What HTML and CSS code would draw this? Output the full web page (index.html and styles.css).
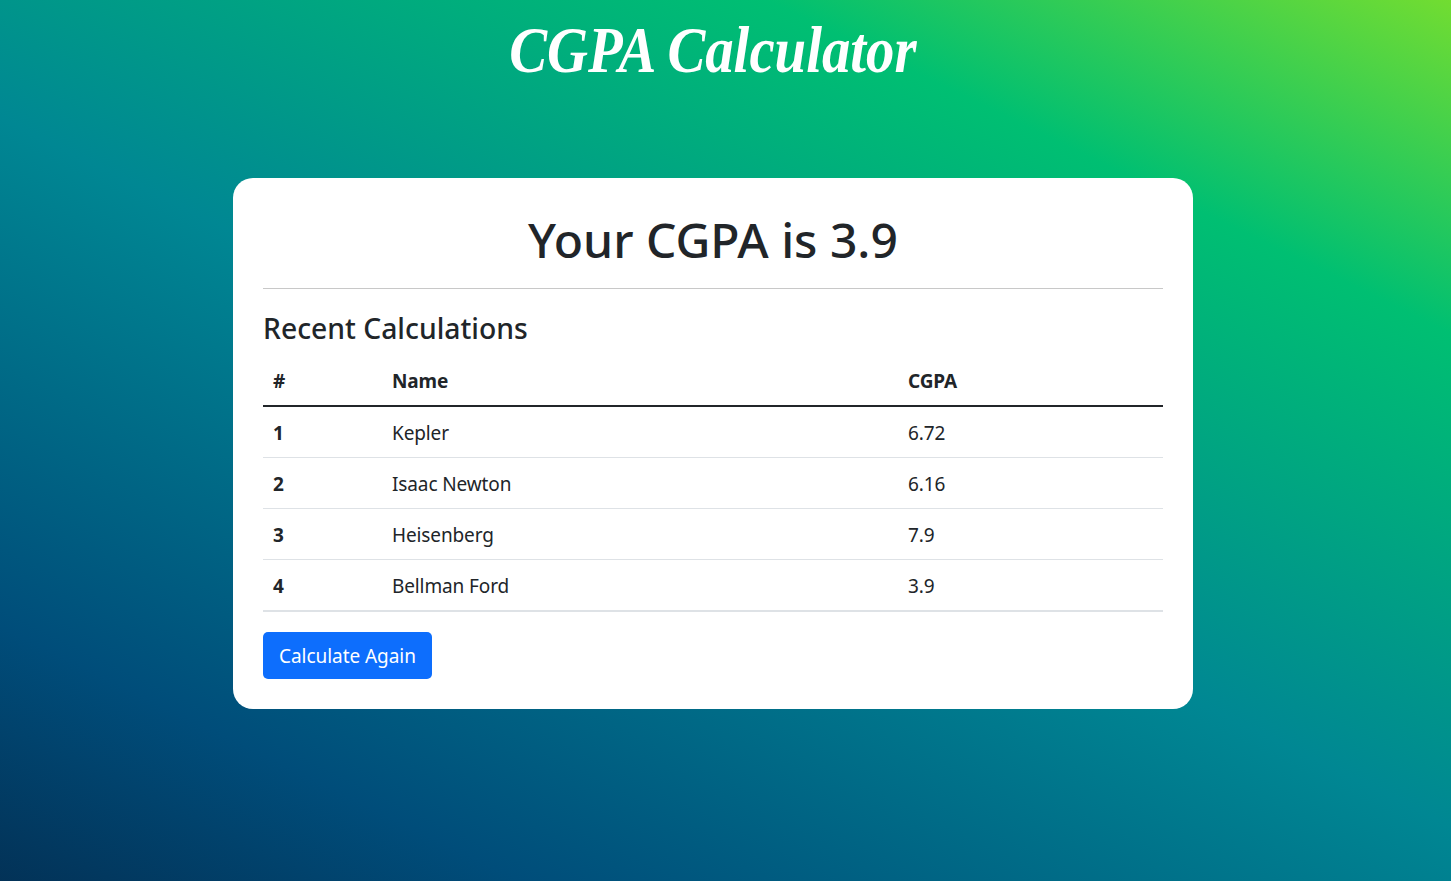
FILE: index.html
```html
<!DOCTYPE html>
<html>
<head>
  <title>CGPA Calculator</title>
  <link rel="stylesheet" href="styles.css">
</head>
<body>

  <div class="wrap">
    <div class="title-bar">
      <h1 class="page-title">CGPA Calculator</h1>
    </div>

    <div class="card">
      <h1 class="result">Your CGPA is 3.9</h1>
      <hr>
      <h3 class="recent">Recent Calculations</h3>

      <table class="results-table">
        <thead>
          <tr>
            <th class="col-num">#</th>
            <th class="col-name">Name</th>
            <th>CGPA</th>
          </tr>
        </thead>
        <tbody>
          <tr><th>1</th><td>Kepler</td><td>6.72</td></tr>
          <tr><th>2</th><td>Isaac Newton</td><td>6.16</td></tr>
          <tr><th>3</th><td>Heisenberg</td><td>7.9</td></tr>
          <tr><th>4</th><td>Bellman Ford</td><td>3.9</td></tr>
        </tbody>
      </table>

      <button class="btn">Calculate Again</button>
    </div>
  </div>

</body>
</html>
```

FILE: styles.css
```css
* {
  box-sizing: border-box;
}
html, body {
  height: 100%;
}
body {
  margin: 0;
  overflow: hidden;
  background: linear-gradient(26deg, #051937 -15%, #004d7a 16%, #008793 48%, #00bf72 79%, #a8eb12 110%);
  color: #212529;
  font-family: "Noto Sans", sans-serif;
  font-size: 19px;
}
.wrap {
  width: 960px;
  margin-left: 233px;
}
.title-bar {
  height: 178px;
  padding-top: 14px;
  text-align: center;
}
.page-title {
  display: inline-block;
  margin: 0;
  color: #fff;
  font-family: "Liberation Serif", serif;
  font-style: italic;
  font-weight: 700;
  font-size: 66px;
  line-height: 72px;
  transform: scaleX(0.86);
}
.card {
  height: 531px;
  padding: 30px;
  background: #fff;
  border-radius: 20px;
}
.result {
  margin: 0;
  padding-top: 1px;
  text-align: center;
  font-weight: 500;
  font-size: 48px;
  line-height: 62px;
}
hr {
  margin: 17px 0 0;
  border: none;
  border-top: 1px solid #c8c8c8;
}
.recent {
  margin: 19px 0 7px;
  font-weight: 500;
  font-size: 28.3px;
  line-height: 40px;
}
.results-table {
  width: 900px;
  border-collapse: collapse;
  table-layout: fixed;
  margin-bottom: 20px;
  letter-spacing: -0.12px;
}
.results-table th, .results-table td {
  height: 51px;
  padding: 2px 10px 0;
  text-align: left;
  border-bottom: 1px solid #dee2e6;
}
.results-table thead th {
  border-bottom: 2px solid #212529;
}
.results-table tbody tr:last-child th,
.results-table tbody tr:last-child td {
  height: 52px;
  border-bottom: 2px solid #dee2e6;
}
.col-num {
  width: 119px;
}
.col-name {
  width: 516px;
}
.btn {
  height: 47px;
  padding: 0 16px;
  background: #0d6efd;
  color: #fff;
  border: none;
  border-radius: 5px;
  font-family: inherit;
  font-size: 19px;
  letter-spacing: -0.05px;
}
```
